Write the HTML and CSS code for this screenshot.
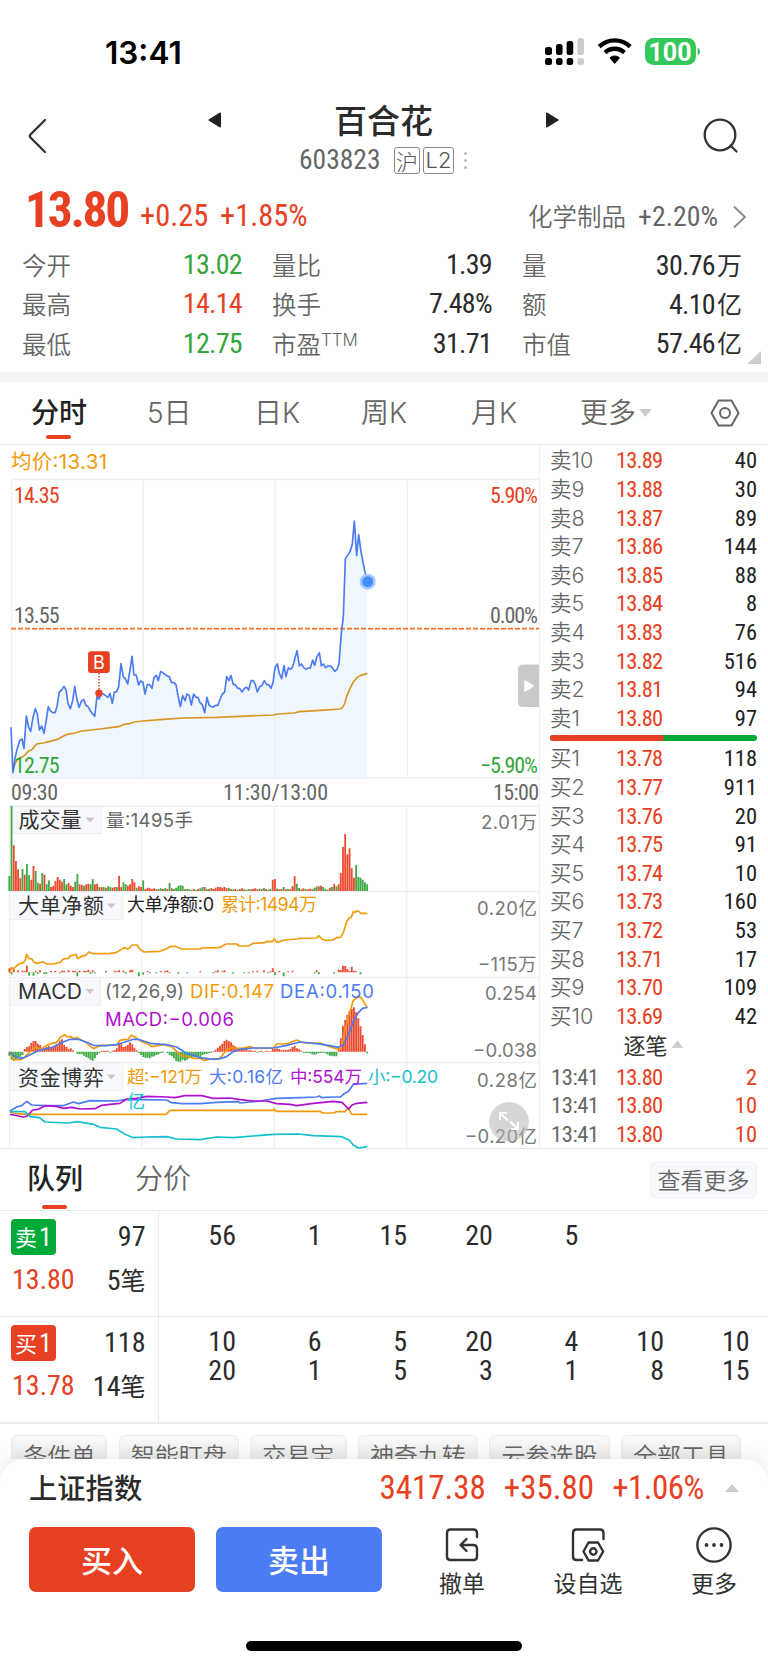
FILE: index.html
```html
<!DOCTYPE html>
<html lang="zh-CN">
<head>
<meta charset="utf-8">
<title>百合花 603823</title>
<link rel="stylesheet" href="styles.css">
</head>
<body>
<div class="phone">
  <div class="status">
    <span class="clock">13:41</span>
    <svg class="status-icons" viewBox="0 0 158 30" width="158" height="30">
      <g fill="#000">
        <rect x="1" y="10" width="7" height="8" rx="2.5"/><rect x="12" y="7" width="6.6" height="11" rx="2.5"/><rect x="22.6" y="4" width="6.6" height="14" rx="2.5"/>
        <rect x="1" y="21" width="7" height="7" rx="2.5"/><rect x="12" y="21" width="6.6" height="7" rx="2.5"/><rect x="22.6" y="21" width="6.6" height="7" rx="2.5"/>
      </g>
      <g fill="#ccc"><rect x="33.4" y="1" width="6.6" height="17" rx="2.5"/><rect x="33.4" y="21" width="6.6" height="7" rx="2.5"/></g>
      <g fill="none" stroke="#000" stroke-width="4.4"><path d="M55.2 9.6a22.4 22.4 0 0 1 31 0"/><path d="M61 15.6a14.2 14.2 0 0 1 19.4 0"/></g>
      <path d="M65.9 20.8a7.2 7.2 0 0 1 9.6 0l-4.8 5.6z" fill="#000" stroke="#000" stroke-linejoin="round"/>
      <rect x="101" y="1" width="51" height="27" rx="8.5" fill="#34c759"/>
      <path d="M153.6 10.500a4.500 4.500 0 0 1 0 8z" fill="#34c759"/>
      <text x="126" y="23.600" text-anchor="middle" class="battery">100</text>
    </svg>
  </div>

  <header class="head">
    <svg class="back" width="22" height="36" viewBox="0 0 22 36"><path d="M18 2 3.500 16.500q-1.500 1.500 0 3L18 34" fill="none" stroke="#333" stroke-width="2.300" stroke-linecap="round"/></svg>
    <div class="title">
      <div class="title-row">
        <svg width="14" height="16" viewBox="0 0 14 16"><path d="M12 1.500v13L1.500 8z" fill="#222" stroke="#222" stroke-width="2" stroke-linejoin="round"/></svg>
        <h1>百合花</h1>
        <svg width="14" height="16" viewBox="0 0 14 16"><path d="M2 1.500v13L12.500 8z" fill="#222" stroke="#222" stroke-width="2" stroke-linejoin="round"/></svg>
      </div>
      <div class="code-row"><span class="code">603823</span><span class="tag">沪</span><span class="tag tag-l2">L2</span><i class="dots"><b></b><b></b><b></b></i></div>
    </div>
    <svg class="search" width="38" height="38" viewBox="0 0 38 38" fill="none" stroke="#333" stroke-width="2.300" stroke-linecap="round"><circle cx="18" cy="18" r="15.300"/><path d="m28.500 28.500 6 6"/></svg>
  </header>

  <section class="quote">
    <div class="quote-top">
      <span class="price">13.80</span><span class="chg">+0.25</span><span class="chg pct">+1.85%</span>
      <span class="sector">化学制品</span><span class="sector-pct">+2.20%</span>
      <svg width="16" height="24" viewBox="0 0 16 24"><path d="m2 1.500 11 10.500-11 10.500" fill="none" stroke="#888" stroke-width="1.800"/></svg>
    </div>
    <div class="stats">
      <div><span>今开</span><b class="down">13.02</b></div><div><span>量比</span><b>1.39</b></div><div><span>量</span><b>30.76<i>万</i></b></div>
      <div><span>最高</span><b class="up">14.14</b></div><div><span>换手</span><b>7.48%</b></div><div><span>额</span><b>4.10<i>亿</i></b></div>
      <div><span>最低</span><b class="down">12.75</b></div><div><span>市盈<sup>TTM</sup></span><b>31.71</b></div><div><span>市值</span><b>57.46<i>亿</i></b></div>
    </div>
    <i class="corner"></i>
  </section>

  <nav class="tabs">
    <span class="active">分时</span><span>5日</span><span>日K</span><span>周K</span><span>月K</span><span class="more">更多<i></i></span>
    <svg width="30" height="28" viewBox="0 0 30 28" fill="none" stroke="#666" stroke-width="2" stroke-linejoin="round"><path d="M8.500 1.500h13L28.500 14l-7 12.500h-13L1.500 14z"/><circle cx="15" cy="14" r="5"/></svg>
  </nav>

  <main class="market">
    <svg class="charts" viewBox="0 445 540 704" width="540" height="704">
      <g class="grid">
        <path d="M11 479.500H539M11 778H539M11.500 479V778M143.200 479V778M275.200 479V778M407.400 479V778M539.500 445V1149"/>
        <path d="M9.500 806H539M9.500 891.500H539M9.500 977.500H539M9.500 1062.500H539M9.500 806V1149M141.500 806V1149M274.300 806V1149M406.600 806V1149"/>
      </g>

      <g transform="translate(0 440) scale(.33333)">
        <path id="price-area" class="area"/>
        <path class="prev-close" d="M33 566H1617"/>
        <polyline class="ln avg" points="40,985 46,970 52,958 72,948 85,934 97,928 110,912 130,909 150,904 170,899 198,884 225,879 245,873 300,867 355,860 370,854 388,851 402,846 430,843 480,839 550,834 650,832 720,829 820,825 832,822 882,819 897,815 950,812 1020,807 1028,802 1034,790 1040,770 1050,745 1060,726 1070,714 1082,706 1102,700"/>
        <polyline id="price-line" class="ln blue" points="33,862 39,998 46,950 52,925 59,902 66,897 72,925 79,828 86,862 92,874 99,832 106,806 112,822 118,870 125,858 132,880 138,845 145,800 151,812 158,818 165,818 171,800 178,756 185,750 192,739 198,750 204,790 211,806 218,782 224,739 231,778 237,802 244,784 251,778 257,795 264,800 271,812 278,822 284,829 291,770 297,777 304,760 310,762 317,767 324,772 330,760 337,790 343,757 350,755 356,740 363,671 370,710 376,716 383,732 390,690 396,649 402,704 409,706 416,735 422,723 429,727 435,762 442,734 449,734 456,745 462,712 469,706 475,722 482,694 488,698 495,703 502,708 508,710 515,728 522,728 528,734 535,772 541,800 548,767 555,782 561,762 568,767 574,795 581,762 588,772 594,772 600,788 607,794 614,818 621,772 627,795 634,800 640,801 647,796 654,796 660,778 667,762 674,756 680,710 687,722 693,706 700,734 706,734 713,745 719,745 726,756 733,745 740,742 746,750 753,722 760,722 766,734 772,756 779,740 786,736 793,722 800,734 806,734 813,745 819,728 825,683 832,672 838,700 845,716 852,677 858,710 865,683 872,688 878,680 885,655 891,632 898,678 904,672 911,683 918,688 924,684 931,684 938,660 944,676 951,649 958,638 964,678 970,672 977,683 984,678 991,678 997,683 1004,694 1011,688 1017,672 1024,580 1030,530 1036,356 1043,346 1050,335 1057,312 1063,243 1070,347 1076,284 1083,335 1090,372 1096,400 1102,425"/>
        <circle cx="1103" cy="425" r="24" fill="#9fcafb"/><circle cx="1103" cy="425" r="16.500" fill="#448df6"/>
      </g>

      <path d="M99 673V690" stroke="#e74022" stroke-width="1.500" stroke-dasharray="1.500 1.500"/>
      <circle cx="99" cy="693.300" r="3.700" fill="#e74022"/>
      <rect x="88" y="651.300" width="21.800" height="21.800" rx="3" fill="#e74022"/>
      <text class="inter" x="99" y="668.500" text-anchor="middle" font-size="18" fill="#fff">B</text>

      <g class="din">
        <text x="14" y="502.500" textLength="45.500" class="f-up">14.35</text>
        <text x="14" y="622.500" textLength="45.500">13.55</text>
        <text x="14" y="772.500" textLength="45.500" class="f-down">12.75</text>
        <text x="490" y="502.500" textLength="48" class="f-up">5.90%</text>
        <text x="490" y="622.500" textLength="48">0.00%</text>
        <text x="480" y="772.500" textLength="58" class="f-down">−5.90%</text>
        <text x="11" y="799.500" textLength="47">09:30</text>
        <text x="223" y="799.500" textLength="105">11:30/13:00</text>
        <text x="493" y="799.500" textLength="46">15:00</text>
      </g>
      <text class="inter" x="11" y="468.500" font-size="20.500" textLength="96" fill="#f09a0c">均价:13.31</text>

      <path d="M523 664.500h16V707h-16q-5 0-5-5v-32.500q0-5 5-5z" fill="#c9c9c9"/>
      <path d="m525 681 8 5-8 5z" fill="#fff" stroke="#fff" stroke-width="1.500" stroke-linejoin="round"/>

      <g class="picker">
        <rect x="12.500" y="806.500" width="89" height="27"/><rect x="9.500" y="892" width="113.300" height="27.500"/>
        <rect x="9.500" y="977.500" width="91" height="27.500"/><rect x="9.500" y="1063" width="113.300" height="27.500"/>
      </g>

      <g transform="translate(0 795) scale(.33333)">
        <path id="vol-up" class="bar-up"/><path id="vol-down" class="bar-down"/>
        <path id="net-up" class="bar-up"/><path id="net-down" class="bar-down"/>
        <path id="macd-up" class="bar-up"/><path id="macd-down" class="bar-down"/>
        <polyline class="ln orange" points="30,535 34,517 40,522 55,508 70,503 76,495 80,478 86,490 96,492 102,502 115,505 128,500 140,507 160,507 180,502 190,492 205,490 212,482 222,480 228,478 233,491 245,484 257,481 267,471 280,476 330,475 348,473 372,458 385,462 397,450 412,450 418,461 432,471 480,469 500,461 512,454 525,454 545,462 600,462 605,459 658,458 678,447 710,447 718,453 745,453 760,445 795,443 800,439 818,440 823,431 830,442 855,435 890,432 900,430 950,429 956,422 967,433 975,436 998,435 1010,428 1022,427 1030,413 1040,380 1048,368 1054,367 1060,350 1065,352 1070,348 1078,350 1082,355 1102,355"/>
        <polyline class="ln orange" points="30,770 36,785 42,795 52,793 62,794 72,788 85,775 97,765 105,756 115,760 125,762 138,752 155,745 170,742 182,726 194,719 202,726 212,724 220,731 232,728 245,736 260,744 272,755 282,761 292,755 305,751 350,750 360,736 372,734 384,733 394,721 405,726 412,732 425,740 440,745 455,755 490,749 515,755 530,770 545,783 560,783 580,790 600,790 612,796 640,791 655,792 665,783 680,764 695,757 710,760 730,759 750,755 765,760 820,759 830,747 850,747 865,745 890,735 905,742 940,745 960,744 985,754 1010,762 1022,762 1030,735 1036,700 1045,665 1053,640 1060,616 1078,604 1085,610 1102,638"/>
        <polyline class="ln blue" points="30,772 45,785 60,790 75,787 95,777 120,765 155,758 180,745 210,733 235,733 260,742 280,751 320,752 350,749 375,741 400,733 415,733 450,745 500,749 530,756 560,775 600,788 640,793 660,791 680,785 700,770 720,763 760,759 820,759 860,751 900,741 950,746 990,752 1015,757 1030,750 1045,720 1060,680 1075,653 1088,640 1102,637"/>
        <polyline class="ln orange" points="30,950 45,956 90,958 498,958 510,946 820,946 823,942 828,949 960,949 968,954 1003,954 1008,950 1035,950 1044,939 1055,958 1102,958"/>
        <polyline class="ln blue" points="30,948 50,936 65,932 80,919 95,930 140,932 190,932 220,921 235,926 270,917 350,918 375,914 425,914 500,915 515,923 545,926 600,926 650,922 715,920 720,924 780,918 830,910 900,908 950,906 958,903 965,908 1000,906 1022,906 1032,896 1046,889 1060,868 1102,865"/>
        <polyline class="ln purple" points="30,958 40,960 70,966 82,963 98,945 115,943 135,932 170,934 190,940 215,937 240,942 285,941 305,931 330,928 360,925 380,912 410,910 440,904 500,906 525,908 555,902 605,902 640,910 690,909 720,914 760,918 800,918 830,926 870,928 890,932 940,925 1000,919 1026,922 1046,942 1056,930 1070,925 1102,922"/>
        <polyline class="ln teal" points="30,950 75,950 90,965 118,968 135,981 205,984 232,980 280,988 300,997 350,1002 375,1018 400,1028 440,1026 500,1025 530,1032 600,1034 650,1026 700,1028 820,1018 895,1017 940,1022 1025,1025 1048,1036 1060,1050 1075,1059 1102,1055"/>
      </g>

      <g fill="#c9c9c9"><path d="M85.500 817.500h9l-4.500 5z"/><path d="M106.700 903.500h9l-4.500 5z"/><path d="M85.500 989h9l-4.500 5z"/><path d="M106.700 1074.500h9l-4.500 5z"/></g>
      <g class="inter" font-size="21" fill="#333">
        <text x="18.500" y="827" textLength="63">成交量</text>
        <text x="18" y="913" textLength="86">大单净额</text>
        <text x="18" y="998.500" textLength="64">MACD</text>
        <text x="18" y="1084.500" textLength="86">资金博弈</text>
      </g>
      <g class="inter" font-size="18.500" fill="#666">
        <text x="106" y="826.500" textLength="87">量:1495手</text>
        <text x="127" y="911" textLength="87" font-size="18" fill="#222">大单净额:0</text>
        <text x="221" y="911" textLength="96" font-size="18" fill="#f09a0c">累计:1494万</text>
        <text x="105" y="997.500" textLength="79">(12,26,9)</text>
        <text x="190" y="997.500" textLength="84" fill="#f09a0c">DIF:0.147</text>
        <text x="280" y="997.500" textLength="94" fill="#4b7cf3">DEA:0.150</text>
        <text x="105" y="1025.500" textLength="129" fill="#b010d0">MACD:−0.006</text>
        <text x="127" y="1082.500" textLength="75" font-size="17.500" fill="#f09a0c">超:−121万</text>
        <text x="209" y="1082.500" textLength="74" font-size="17.500" fill="#4b7cf3">大:0.16亿</text>
        <text x="290" y="1082.500" textLength="72" font-size="17.500" fill="#b010d0">中:554万</text>
        <text x="368" y="1082.500" textLength="70" font-size="17.500" fill="#12bfcc">小:−0.20</text>
        <text x="127" y="1107.500" font-size="18" fill="#12bfcc">亿</text>
      </g>
      <g class="inter" font-size="18.500" fill="#777">
        <text x="481" y="829" textLength="56">2.01万</text>
        <text x="477" y="915" textLength="60">0.20亿</text>
        <text x="478" y="971" textLength="58.500">−115万</text>
        <text x="485" y="1000" textLength="52">0.254</text>
        <text x="473" y="1056.500" textLength="64">−0.038</text>
        <text x="477" y="1086.500" textLength="60">0.28亿</text>
        <text x="465" y="1142.500" textLength="72">−0.20亿</text>
      </g>
      <circle cx="509" cy="1121.700" r="19.800" fill="#b4b4b4" fill-opacity=".55"/>
      <path d="M500 1120v-7h7M500 1113l8 7.500M518 1122v7h-7M518 1129l-8-7.500" fill="none" stroke="#fff" stroke-width="2"/>
    </svg>

    <div class="book">
      <ul>
        <li><span>卖10</span><b>13.89</b><em>40</em></li><li><span>卖9</span><b>13.88</b><em>30</em></li><li><span>卖8</span><b>13.87</b><em>89</em></li><li><span>卖7</span><b>13.86</b><em>144</em></li><li><span>卖6</span><b>13.85</b><em>88</em></li><li><span>卖5</span><b>13.84</b><em>8</em></li><li><span>卖4</span><b>13.83</b><em>76</em></li><li><span>卖3</span><b>13.82</b><em>516</em></li><li><span>卖2</span><b>13.81</b><em>94</em></li><li><span>卖1</span><b>13.80</b><em>97</em></li>
      </ul>
      <div class="ratio"><i></i></div>
      <ul>
        <li><span>买1</span><b>13.78</b><em>118</em></li><li><span>买2</span><b>13.77</b><em>911</em></li><li><span>买3</span><b>13.76</b><em>20</em></li><li><span>买4</span><b>13.75</b><em>91</em></li><li><span>买5</span><b>13.74</b><em>10</em></li><li><span>买6</span><b>13.73</b><em>160</em></li><li><span>买7</span><b>13.72</b><em>53</em></li><li><span>买8</span><b>13.71</b><em>17</em></li><li><span>买9</span><b>13.70</b><em>109</em></li><li><span>买10</span><b>13.69</b><em>42</em></li>
      </ul>
      <div class="ticks-head">逐笔<i></i></div>
      <ul class="ticks">
        <li><span>13:41</span><b>13.80</b><em>2</em></li><li><span>13:41</span><b>13.80</b><em>10</em></li><li><span>13:41</span><b>13.80</b><em>10</em></li>
      </ul>
    </div>
  </main>

  <section class="queue">
    <div class="queue-tabs"><span class="active">队列</span><span>分价</span><a>查看更多</a></div>
    <div class="queue-row">
      <div class="side"><u class="sell">卖<s>1</s></u><b>97</b><em>13.80</em><b>5<i>笔</i></b></div>
      <div class="orders"><span>56</span><span>1</span><span>15</span><span>20</span><span>5</span></div>
    </div>
    <div class="queue-row">
      <div class="side"><u class="buy">买<s>1</s></u><b>118</b><em>13.78</em><b>14<i>笔</i></b></div>
      <div class="orders"><span>10</span><span>6</span><span>5</span><span>20</span><span>4</span><span>10</span><span>10</span><span>20</span><span>1</span><span>5</span><span>3</span><span>1</span><span>8</span><span>15</span></div>
    </div>
  </section>

  <div class="chips"><span>条件单</span><span>智能盯盘</span><span>交易宝</span><span>神奇九转</span><span>云参选股</span><span>全部工具</span></div>

  <footer class="sheet">
    <div class="index"><span class="name">上证指数</span><span class="v">3417.38</span><span class="v">+35.80</span><span class="v last">+1.06%</span><i></i></div>
    <div class="actions">
      <button class="btn buy">买入</button><button class="btn sell">卖出</button>
      <div class="act">
        <svg width="36" height="36" viewBox="0 0 36 36"><path d="M33 10V6q0-3.500-3.500-3.500h-23Q3 2.500 3 6v23.500Q3 33 6.500 33h23q3.500 0 3.500-3.500V22q0-4-4-4H17M22.500 12 16.500 18l6 6"/></svg>
        <span>撤单</span>
      </div>
      <div class="act">
        <svg width="36" height="36" viewBox="0 0 36 36"><path d="M33.500 12V6q0-3.500-3.500-3.500H6.500Q3 2.500 3 6v23.500Q3 33 6.500 33H12M18.500 15.500h9.500l5.200 9L28 33.500h-9.500l-5-9z"/><circle cx="23.300" cy="24.500" r="3.200"/></svg>
        <span>设自选</span>
      </div>
      <div class="act act-more">
        <svg width="36" height="36" viewBox="0 0 36 36"><circle cx="18" cy="18" r="16.600"/><g fill="#333" stroke="none"><circle cx="10.500" cy="18" r="1.900"/><circle cx="18" cy="18" r="1.900"/><circle cx="25.500" cy="18" r="1.900"/></g></svg>
        <span>更多</span>
      </div>
    </div>
    <div class="home"></div>
  </footer>
</div>
<script src="charts.js"></script>
</body>
</html>
```
FILE: styles.css
```css
*{box-sizing:border-box;margin:0;padding:0}
i,em,s,u{font-style:normal;text-decoration:none}
ul{list-style:none}
svg{display:block;flex:none}
body{background:#fff;width:768px;height:1665px;overflow:hidden;color:#333;font-family:Inter,"Noto Sans CJK SC",sans-serif}
.phone{width:768px;height:1665px;overflow:hidden;display:flex;flex-direction:column}

.status{height:96px;display:flex;align-items:flex-start;justify-content:space-between;padding:37px 66px 0 105px;flex:none}
.clock{font:600 31.500px/31px Inter,sans-serif;letter-spacing:0;color:#000}
.battery{font:700 25px Roboto,sans-serif;font-stretch:88%;fill:#fff}

.head{height:88px;display:flex;padding:0 29px 0 27px;flex:none}
.back{margin-top:22px}
.search{margin-top:21px;margin-right:-1px}
.title{flex:1;padding-left:16px}
.title-row{display:flex;justify-content:center;align-items:center;height:48px;gap:112px}
.title-row h1{font:500 33px/48px "Noto Sans CJK SC",sans-serif;color:#2b2b2b;width:99px;white-space:nowrap;margin-top:-3px}
.code-row{display:flex;align-items:center;height:32px;margin-left:234px;color:#666}
.code{font:400 27.500px/32px Roboto,sans-serif;font-stretch:75%;width:95px}
.tag{width:26px;height:27px;border:1.500px solid #888;border-radius:3px;font:300 22px/24px "Noto Sans CJK SC",sans-serif;text-align:center;margin-right:3px;color:#555}
.tag-l2{width:31px;font:300 22px/24px Inter,sans-serif;margin-right:10px}
.dots{display:flex;flex-direction:column;gap:4px}
.dots b{width:3px;height:3px;border-radius:50%;background:#bbb}

.quote{height:188px;flex:none;position:relative}
.quote-top{height:61px;display:flex;align-items:center;padding:0 20px 8px 25px}
.price{font:700 49.500px/50px Roboto,sans-serif;font-stretch:75%;color:#e74022;letter-spacing:-2.300px;width:115px;margin-top:-2px}
.chg{font:400 30.500px/36px Roboto,sans-serif;font-stretch:75%;color:#e74022;margin-top:10px;width:80px}
.pct{flex:1}
.sector{font:350 24.500px/30px "Noto Sans CJK SC",sans-serif;color:#666;margin-top:10px;margin-right:12px}
.sector-pct{font:400 27.800px/30px Roboto,sans-serif;font-stretch:75%;color:#666;margin-top:12px;margin-right:14px}
.quote-top svg{margin-top:12px}
.stats{display:grid;grid-template-columns:220px 220px 220px;column-gap:30px;grid-auto-rows:39.300px;padding-left:22px}
.stats div{display:flex;justify-content:space-between;align-items:center;line-height:39px}
.stats span{font:350 24.500px/39px "Noto Sans CJK SC",sans-serif;color:#666;white-space:nowrap}
.stats b{font:400 28px/39px Roboto,"Noto Sans CJK SC",sans-serif;font-stretch:75%;color:#2b2b2b;letter-spacing:-.700px;white-space:nowrap}
.stats b i{font:400 25px/39px "Noto Sans CJK SC",sans-serif;letter-spacing:0;margin-left:2px}
.stats .up{color:#e74022}
.stats .down{color:#33a63a}
.stats sup{font:300 17px/20px Inter,sans-serif;vertical-align:8px;letter-spacing:0}
.corner{position:absolute;right:7px;bottom:8px;width:14px;height:13px;background:#ccc;clip-path:polygon(100% 0,100% 100%,0 100%)}

.tabs{height:73px;border-top:10px solid #f4f4f4;border-bottom:1px solid #ececec;display:grid;grid-template-columns:116px 107px 107px 110px 109px 1fr 30px;align-items:center;padding:0 28px 0 31px;font:350 28px/60px Inter,"Noto Sans CJK SC",sans-serif;color:#666;flex:none}
.tabs .active{font-weight:500;color:#222;position:relative}
.tabs .active::after,.queue-tabs .active::after{content:"";position:absolute;left:15px;bottom:4px;width:25px;height:4px;border-radius:2px;background:#e74022}
.tabs .more{display:flex;align-items:center;gap:3px}
.tabs .more i{width:13px;height:8px;background:#ccc;clip-path:polygon(0 0,100% 0,50% 100%)}

.market{display:flex;height:704px;border-bottom:1px solid #e8e8e8;flex:none}
.charts{margin-bottom:-1px}
.grid path{fill:none;stroke:#efefef;stroke-width:1.300}
.area{fill:#e2eefd;fill-opacity:.55}
.prev-close{stroke:#f97316;stroke-width:5;stroke-dasharray:15 6}
.ln{fill:none;stroke-width:5;stroke-linejoin:round}
.avg{stroke:#d9951f}
.orange{stroke:#f09a0c}
.blue{stroke:#4b7cf3}
.purple{stroke:#b010d0}
.teal{stroke:#12bfcc}
.bar-up{stroke:#ee4a2e;stroke-width:5.500}
.bar-down{stroke:#3eaa45;stroke-width:5.500}
.din text{font:400 22px Roboto,sans-serif;font-stretch:75%;fill:#666}
.din .f-up{fill:#e74022}
.din .f-down{fill:#33a63a}
.inter{font-family:Inter,"Noto Sans CJK SC",sans-serif}
.picker rect{fill:#f7f9fd;stroke:#eceef3;stroke-width:1}

.book{width:228px;padding:1.200px 11px 0 10px}
.book li{height:28.600px;display:flex;align-items:center;line-height:28px}
.book span{width:66px;font:350 21.500px/28px Inter,"Noto Sans CJK SC",sans-serif;color:#666}
.book b{flex:1;font:400 22.500px/28px Roboto,sans-serif;font-stretch:75%;color:#e74022;letter-spacing:-.800px}
.book em{font:400 22.500px/28px Roboto,sans-serif;font-stretch:75%;color:#222}
.ratio{height:6px;margin:3px 0;border-radius:3px;background:#00a938}
.ratio i{display:block;width:114px;height:6px;border-radius:3px;background:#e74022}
.ticks-head{height:32.400px;display:flex;align-items:center;justify-content:center;gap:4px;font:400 22px/32px "Noto Sans CJK SC",sans-serif;padding-bottom:4px}
.ticks-head i,.index i{width:12px;height:8px;background:#ccc;clip-path:polygon(0 100%,100% 100%,50% 0)}
.ticks span{font:400 22.500px/28px Roboto,sans-serif;font-stretch:75%;letter-spacing:-.400px;padding-left:1px}
.ticks em{color:#e74022}

.queue{flex:none}
.queue-tabs{height:62px;display:flex;align-items:center;padding:0 11px 0 27px;gap:52px;font:350 28px/58px "Noto Sans CJK SC",sans-serif;color:#666;border-bottom:1px solid #e8e8e8}
.queue-tabs span{padding-bottom:5px}
.queue-tabs .active{font-weight:500;color:#222;position:relative}
.queue-tabs .active::after{bottom:2px}
.queue-tabs a{margin-left:auto;width:107px;height:36px;border:1px solid #eceef3;border-radius:6px;background:#f7f9fd;font-size:23px;line-height:33px;text-align:center}
.queue-row{height:106.300px;display:flex;border-bottom:1px solid #ececec}
.queue-row:last-child{border-bottom:2px solid #ececec}
.side{width:158.500px;border-right:1px solid #ececec;display:grid;grid-template-columns:63px 1fr;grid-template-rows:42px 44px;align-items:center;padding:4.500px 12px 0 11px;font:400 28px/42px Roboto,"Noto Sans CJK SC",sans-serif;font-stretch:75%}
.side b{font-weight:400;text-align:right;color:#2b2b2b}
.side b i{font-size:25px;font-family:"Noto Sans CJK SC",sans-serif}
.side em{color:#e74022;padding-left:1px;padding-top:1px}
.side u{width:45px;height:36px;border-radius:4px;color:#fff;font:400 22px/33px "Noto Sans CJK SC",sans-serif;display:flex;justify-content:center;align-items:center;gap:2px}
.side u s{font:400 26px/36px Roboto,sans-serif;font-stretch:75%}
.side .sell{background:#00a938}
.side .buy{background:#e74022}
.orders{flex:1;display:grid;grid-template-columns:77.500px repeat(6,85.600px);grid-auto-rows:28.500px;text-align:right;font:400 28px/28.500px Roboto,sans-serif;font-stretch:75%;padding-top:11px;align-content:start;color:#2b2b2b}

.chips{display:flex;gap:11.200px;padding:11.500px 0 0 11px;height:35px;overflow:hidden;flex:none}
.chips span{flex:none;height:40px;border:1px solid #ececec;border-radius:6px;background:linear-gradient(#fafafa,#ededed 60%);padding:0 11.200px;font:350 24px/37px "Noto Sans CJK SC",sans-serif;color:#666}

.sheet{flex:1;background:#fff;border-radius:24px 24px 0 0;box-shadow:0 -4px 20px rgba(0,0,0,.08);padding:0 0 0 29px;position:relative}
.index{height:68px;display:flex;align-items:center;padding:0 29px 9px 0}
.index .name{font:500 28.300px/40px "Noto Sans CJK SC",sans-serif;color:#2b2b2b;margin-right:auto;margin-top:-3px}
.index .v{font:400 33px/40px Roboto,sans-serif;font-stretch:75%;color:#e74022;margin-left:18px}
.index .last{letter-spacing:-.500px}
.index i{width:14px;margin-left:21px}
.actions{display:flex;align-items:flex-start}
.btn{flex:none;width:166px;height:65px;border:0;border-radius:7px;color:#fff;font:500 31px/62px "Noto Sans CJK SC",sans-serif;margin-right:21px}
.btn.buy{background:#e74022}
.btn.sell{background:#4b7cf3;margin-right:17px}
.act{flex:none;display:flex;flex-direction:column;align-items:center;width:126px}
.act-more{width:106px;margin-left:10px}
.act svg{fill:none;stroke:#333;stroke-width:2.400;stroke-linecap:round;stroke-linejoin:round}
.act span{font:400 23px/34px "Noto Sans CJK SC",sans-serif;margin-top:2px}
.home{position:absolute;left:246px;bottom:14px;width:276px;height:10px;border-radius:5px;background:#000}
```
FILE: charts.js
```js
// One bar per traded minute; sign gives the colour and direction.
const STEP = 6.585;
function draw(name, base, values, signed) {
  let up = '', down = '';
  values.forEach((v, i) => {
    if (!v) return;
    const x = (28 + i * STEP).toFixed(1);
    if (v > 0) up += `M${x} ${base}v${-v}`;
    else down += `M${x} ${base}v${signed ? -v : v}`;
  });
  document.getElementById(name + '-up').setAttribute('d', up);
  document.getElementById(name + '-down').setAttribute('d', down);
}

draw('vol', 288, [-45,-255,137,90,65,38,-66,49,-81,-48,34,75,-60,-25,22,-54,49,-20,-32,12,16,30,42,34,28,-36,-20,24,16,12,-28,-51,20,18,-16,20,22,-20,-36,20,22,-12,12,-12,10,-14,-12,10,12,-12,46,12,-26,-20,16,20,36,26,-10,14,12,-32,6,10,8,6,8,5,-6,-8,6,-9,6,-24,8,-6,-10,-16,-17,-16,5,-6,-5,-4,6,-4,6,-8,-12,12,-5,-6,9,6,10,12,12,10,12,8,-10,6,-5,6,-4,6,8,-5,4,-6,5,6,8,5,-7,5,-9,6,-4,-6,34,36,-7,5,6,-12,5,-6,5,14,44,-22,-9,5,8,-6,5,7,5,-10,-14,14,16,-12,-7,-4,10,-12,22,-14,20,54,132,171,110,128,68,40,-78,-42,-40,-34,-26,-20], false);

draw('net', 532, [12,-6,10,0,6,0,5,4,20,-10,0,-10,5,-5,6,0,-6,-4,0,4,0,5,0,-3,5,5,0,6,0,5,4,-12,5,0,5,4,8,-5,6,-3,0,0,0,0,4,0,0,0,5,3,6,0,5,-4,0,6,8,0,0,-12,0,-7,0,4,-3,0,0,-3,0,4,0,5,6,-3,0,0,0,-4,0,0,0,-3,0,0,0,0,0,4,0,0,0,0,0,-3,3,6,0,3,6,0,0,0,-4,0,0,0,0,-3,0,-3,0,3,0,5,0,0,6,0,-3,3,12,-8,0,4,0,-12,0,3,0,5,0,0,0,0,0,0,0,0,0,-3,6,-6,0,0,0,0,0,0,-4,0,8,7,20,19,10,4,17,5,3,0,-6,0,0], true);

draw('macd', 770, [-12,-24,-28,-24,-20,-16,-10,8,14,16,26,32,32,24,20,12,10,14,17,12,15,18,22,33,37,20,14,8,10,4,0,-6,-8,-8,-12,-16,-20,-24,-27,-20,-10,-4,3,3,3,3,-3,3,5,10,26,22,14,16,20,28,22,12,4,-4,-10,-16,-18,-18,-20,-15,-14,-10,-8,-4,-3,0,-4,-10,-14,-20,-28,-30,-30,-24,-27,-24,-20,-18,-17,-17,-18,-16,-10,-7,-6,-4,-3,2,6,12,18,24,32,36,32,28,20,16,10,12,12,10,8,4,4,2,3,-3,2,3,-2,3,2,2,10,8,10,8,4,6,5,6,8,14,18,10,7,3,-3,-4,-3,-5,-8,-9,-7,-4,-4,-3,-5,-8,-12,-12,-14,-14,10,40,78,95,110,122,128,133,118,100,76,50,22,-5], true);

// Fill under the price curve down to the axis.
const curve = document.getElementById('price-line').getAttribute('points');
document.getElementById('price-area').setAttribute('d', `M33 1014L${curve.replace(/ /g, 'L')}L1102 1014Z`);
```
